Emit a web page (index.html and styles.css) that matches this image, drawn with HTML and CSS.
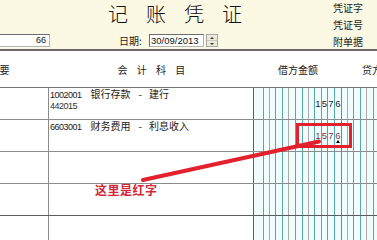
FILE: index.html
```html
<!DOCTYPE html>
<html lang="zh">
<head>
<meta charset="utf-8">
<title>记账凭证</title>
<link rel="stylesheet" href="styles.css">
</head>
<body>
<div class="sheet">
  <div class="top">
    <div class="top-main">
      <h1 class="title">记账凭证</h1>
      <div class="fields">
        <span class="box box-no">66</span>
        <span class="lbl">日期:</span>
        <span class="box box-date">30/09/2013</span>
        <span class="spin"><i class="up"></i><i class="down"></i></span>
      </div>
    </div>
    <div class="top-side">
      <div>凭证字</div>
      <div>凭证号</div>
      <div>附单据</div>
    </div>
  </div>

  <div class="head">
    <div class="h-sum">摘要</div>
    <div class="h-subj">会计科目</div>
    <div class="h-debit">借方金额</div>
    <div class="h-credit">贷方金额</div>
  </div>

  <div class="row">
    <div class="sum"></div>
    <div class="subj">
      <div><span class="code">1002001</span>银行存款<span class="dash">-</span>建行</div>
      <div class="code">442015</div>
    </div>
    <div class="amt debit"><span></span><span></span><span></span><span></span><span></span><span></span><span></span><span></span><span></span><span>1</span><span>5</span><span>7</span><span>6</span></div>
    <div class="amt credit"><span></span><span></span><span></span><span></span><span></span><span></span></div>
  </div>

  <div class="row">
    <div class="sum"></div>
    <div class="subj">
      <div><span class="code">6603001</span>财务费用<span class="dash">-</span>利息收入</div>
    </div>
    <div class="amt debit red"><span></span><span></span><span></span><span></span><span></span><span></span><span></span><span></span><span></span><span>1</span><span>5</span><span>7</span><span class="cur">6<i class="caret"></i></span></div>
    <div class="amt credit"><span></span><span></span><span></span><span></span><span></span><span></span></div>
  </div>

  <div class="row">
    <div class="sum"></div>
    <div class="subj"></div>
    <div class="amt debit"><span></span><span></span><span></span><span></span><span></span><span></span><span></span><span></span><span></span><span></span><span></span><span></span><span></span></div>
    <div class="amt credit"><span></span><span></span><span></span><span></span><span></span><span></span></div>
  </div>

  <div class="row dark">
    <div class="sum"></div>
    <div class="subj"></div>
    <div class="amt debit"><span></span><span></span><span></span><span></span><span></span><span></span><span></span><span></span><span></span><span></span><span></span><span></span><span></span></div>
    <div class="amt credit"><span></span><span></span><span></span><span></span><span></span><span></span></div>
  </div>

  <div class="row">
    <div class="sum"></div>
    <div class="subj"></div>
    <div class="amt debit"><span></span><span></span><span></span><span></span><span></span><span></span><span></span><span></span><span></span><span></span><span></span><span></span><span></span></div>
    <div class="amt credit"><span></span><span></span><span></span><span></span><span></span><span></span></div>
  </div>
</div>

<div class="mark"></div>
<svg class="arrow" width="377" height="240" viewBox="0 0 377 240">
  <line x1="143" y1="180" x2="319" y2="141.5" stroke="#e3212d" stroke-width="4" stroke-linecap="round"/>
</svg>
<div class="note">这里是红字</div>
</body>
</html>
```

FILE: styles.css
```css
* {
  box-sizing: border-box;
  margin: 0;
  padding: 0;
}

body {
  width: 377px;
  height: 240px;
  overflow: hidden;
  position: relative;
  background: #ffffff;
  color: #1c1c1c;
  font-family: "Noto Sans CJK SC", "Liberation Sans", sans-serif;
}

.sheet {
  margin-left: -50px;
  width: 700px;
}

/* ---------- top band ---------- */
.top {
  display: flex;
  height: 51px;
  background: #fbf9e4;
  border-bottom: 2px solid #686868;
}

.top-main {
  width: 383px;
  display: flex;
  flex-direction: column;
}

.title {
  height: 34px;
  padding: 3px 0 0 158px;
  font-size: 20px;
  font-weight: 300;
  line-height: 22px;
  letter-spacing: 18px;
  color: #111;
}

.fields {
  display: flex;
  align-items: center;
  height: 13px;
}

.box {
  height: 13px;
  background: #fff;
  border: 1px solid #b4b4b4;
  border-top-color: #6c6c6c;
  border-left-color: #6c6c6c;
  font-family: "Liberation Sans", sans-serif;
  line-height: 11px;
  color: #111;
}

.box-no {
  margin-left: 10px;
  width: 90px;
  padding-right: 3px;
  text-align: right;
  font-size: 9px;
}

.lbl {
  margin-left: 69px;
  width: 30px;
  font-size: 10px;
  line-height: 13px;
}

.box-date {
  width: 55px;
  padding-left: 1px;
  font-size: 9.5px;
}

.spin {
  margin-left: 2px;
  width: 12px;
  height: 13px;
  display: flex;
  flex-direction: column;
  background: #ece9d8;
  border: 1px solid #a8a8a8;
}

.spin i {
  flex: 1;
  display: flex;
  align-items: center;
  justify-content: center;
}

.spin .up {
  border-bottom: 1px solid #c8c8c8;
}

.spin .up::before,
.spin .down::before {
  content: "";
  border-left: 2px solid transparent;
  border-right: 2px solid transparent;
}

.spin .up::before {
  border-bottom: 2px solid #333;
}

.spin .down::before {
  border-top: 2px solid #333;
}

.top-side {
  margin-top: -1px;
  font-size: 10px;
  line-height: 17px;
  color: #1a1a1a;
}

/* ---------- header ---------- */
.head {
  display: flex;
  align-items: center;
  height: 37px;
  border-bottom: 1px solid #747474;
  font-size: 10px;
  color: #222;
}

.h-sum {
  width: 99px;
  text-align: center;
}

.h-subj {
  width: 205px;
  padding-left: 9px;
  text-align: center;
  letter-spacing: 9.3px;
}

.h-debit {
  width: 88px;
  text-align: center;
}

.h-credit {
  width: 88px;
  padding-right: 8px;
  text-align: center;
}

/* ---------- rows ---------- */
.row {
  display: flex;
  height: 32px;
  border-bottom: 1px solid #8c8c8c;
}

.row.dark {
  border-bottom-color: #5c5c5c;
}

.sum {
  width: 99px;
  border-right: 1px solid #8a8a8a;
}

.subj {
  width: 205px;
  padding: 1px 0 0 1px;
  border-right: 1px solid #5e5e5e;
  font-size: 10px;
  line-height: 10.5px;
  color: #1a1a1a;
}

.code {
  font-family: "Liberation Sans", sans-serif;
  font-size: 9px;
  letter-spacing: -0.5px;
  margin-right: 9px;
}

.subj > .code {
  margin-right: 0;
  color: #333;
}

.dash {
  margin: 0 7px 0 8px;
}

.amt {
  display: flex;
  height: 100%;
}

.amt span {
  position: relative;
  height: 100%;
  display: flex;
  align-items: center;
  justify-content: center;
  background: #f1fcfc;
  border-right: 1px solid #5aa8a8;
  font-family: "Liberation Sans", sans-serif;
  font-size: 9.5px;
  color: #1a1a1a;
}

.amt.red span {
  color: #7c3a3a;
}

/* debit digit columns */
.debit span { width: 7px; }
.debit span:nth-child(1) { width: 10px; }
.debit span:nth-child(2),
.debit span:nth-child(3),
.debit span:nth-child(5),
.debit span:nth-child(8),
.debit span:nth-child(9),
.debit span:nth-child(11) { width: 6px; }

.debit span:nth-child(2),
.debit span:nth-child(5),
.debit span:nth-child(8) { border-right-color: #a9a9a9; }
.debit span:nth-child(11) { border-right-color: #c87474; }
.debit span:nth-child(13) { border-right-color: #4c9999; }

/* credit digit columns */
.credit span { width: 7px; }
.credit span:nth-child(1),
.credit span:nth-child(2),
.credit span:nth-child(4),
.credit span:nth-child(6) { width: 6px; }
.credit span:nth-child(1),
.credit span:nth-child(4) { border-right-color: #a9a9a9; }

.caret {
  position: absolute;
  left: 1px;
  top: 20px;
  width: 0;
  height: 0;
  border-left: 2.5px solid transparent;
  border-right: 2.5px solid transparent;
  border-bottom: 3px solid #000;
}

/* ---------- annotation overlay ---------- */
.mark {
  position: absolute;
  left: 296px;
  top: 123px;
  width: 56px;
  height: 25px;
  border: 3px solid #e3212d;
}

.arrow {
  position: absolute;
  left: 0;
  top: 0;
}

.note {
  position: absolute;
  left: 95px;
  top: 182px;
  font-size: 12px;
  font-weight: 700;
  line-height: 15px;
  letter-spacing: 0.5px;
  color: #d3283a;
}
```
